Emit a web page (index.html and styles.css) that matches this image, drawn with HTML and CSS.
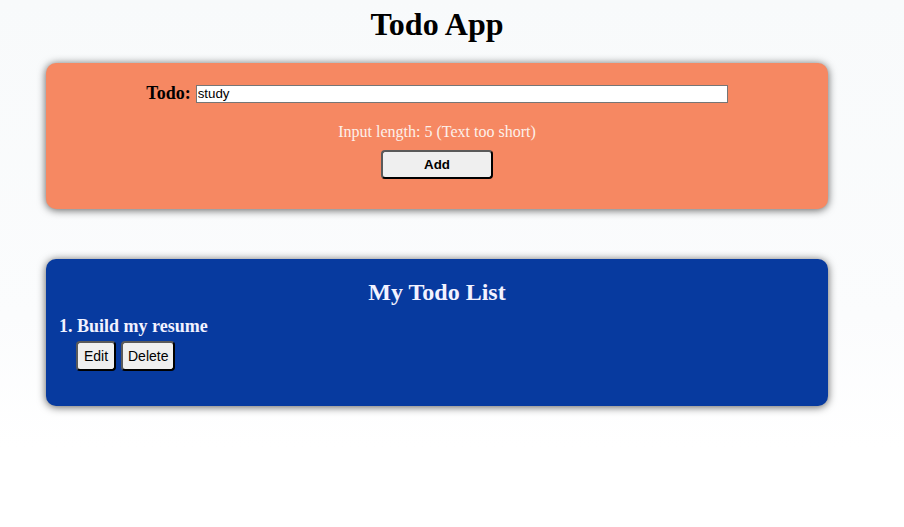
FILE: index.html
```html
<!DOCTYPE html>
<html>
<head>
<meta charset="utf-8">
<link rel="stylesheet" href="styles.css">
</head>
<body>
<div class="app">
  <h1 class="title">Todo App</h1>
  <section class="card card-form">
    <div class="form-row">
      <label class="form-label" for="todo">Todo:</label>
      <input class="form-input" id="todo" type="text" value="study">
    </div>
    <p class="hint">Input length: 5 (Text too short)</p>
    <button class="btn btn-add">Add</button>
  </section>
  <section class="card card-list">
    <h2 class="list-title">My Todo List</h2>
    <div class="item">
      <div class="item-text">1. Build my resume</div>
      <div class="item-actions">
        <button class="btn btn-small">Edit</button>
        <button class="btn btn-small">Delete</button>
      </div>
    </div>
  </section>
</div>
</body>
</html>
```
FILE: styles.css
```css
html, body {
  margin: 0;
  padding: 0;
}
body {
  min-height: 527px;
  background: linear-gradient(to bottom, #f8fafb 0%, #fbfcfd 60%, #ffffff 85%);
  font-family: "Liberation Serif", "Times New Roman", serif;
}
.app {
  width: 782px;
  margin-left: 46px;
  padding-top: 6px;
  display: flex;
  flex-direction: column;
}
.title {
  margin: 0;
  font-size: 32px;
  line-height: 37px;
  text-align: center;
  color: #000;
}
.card {
  border-radius: 10px;
  box-shadow: 0 1px 8px rgba(0, 0, 0, 0.65);
  display: flex;
  flex-direction: column;
  align-items: center;
}
.card-form {
  margin-top: 20px;
  height: 146px;
  box-sizing: border-box;
  padding-top: 20px;
  background: #f68862;
}
.form-row {
  display: flex;
  align-items: center;
  gap: 5px;
}
.form-label {
  font-weight: bold;
  font-size: 18px;
  color: #000;
}
.form-input {
  width: 532px;
  height: 18px;
  box-sizing: border-box;
  margin: 0;
  padding: 0 1px;
  border: 1px solid #767676;
  font-family: "Liberation Sans", Arial, sans-serif;
  font-size: 13.333px;
  background: #fff;
  color: #000;
}
.hint {
  margin: 19px 0 0;
  font-size: 16px;
  line-height: 18px;
  color: #fdf0ea;
}
.btn {
  font-family: "Liberation Sans", Arial, sans-serif;
  font-size: 13.333px;
  background: #efefef;
  color: #000;
  border: 2px outset #555;
  border-color: #5a5a5a #111 #111 #5a5a5a;
  border-radius: 4px;
  box-sizing: border-box;
  height: 29px;
  cursor: pointer;
}
.btn-add {
  margin-top: 9px;
  width: 112px;
  font-weight: bold;
}
.card-list {
  margin-top: 50px;
  height: 147px;
  box-sizing: border-box;
  padding: 19px 13px 0;
  background: #073a9f;
  color: #f2f2ff;
}
.list-title {
  margin: 0;
  font-size: 24px;
  line-height: 28px;
  text-align: center;
}
.item {
  align-self: stretch;
  margin-top: 10px;
}
.item-text {
  font-weight: bold;
  font-size: 18px;
  line-height: 21px;
}
.item-actions {
  display: flex;
  gap: 5px;
  margin-top: 4px;
  padding-left: 17px;
}
.btn-small {
  font-size: 14px;
  padding: 0 5px;
  min-width: 40px;
  height: 30px;
}
```
